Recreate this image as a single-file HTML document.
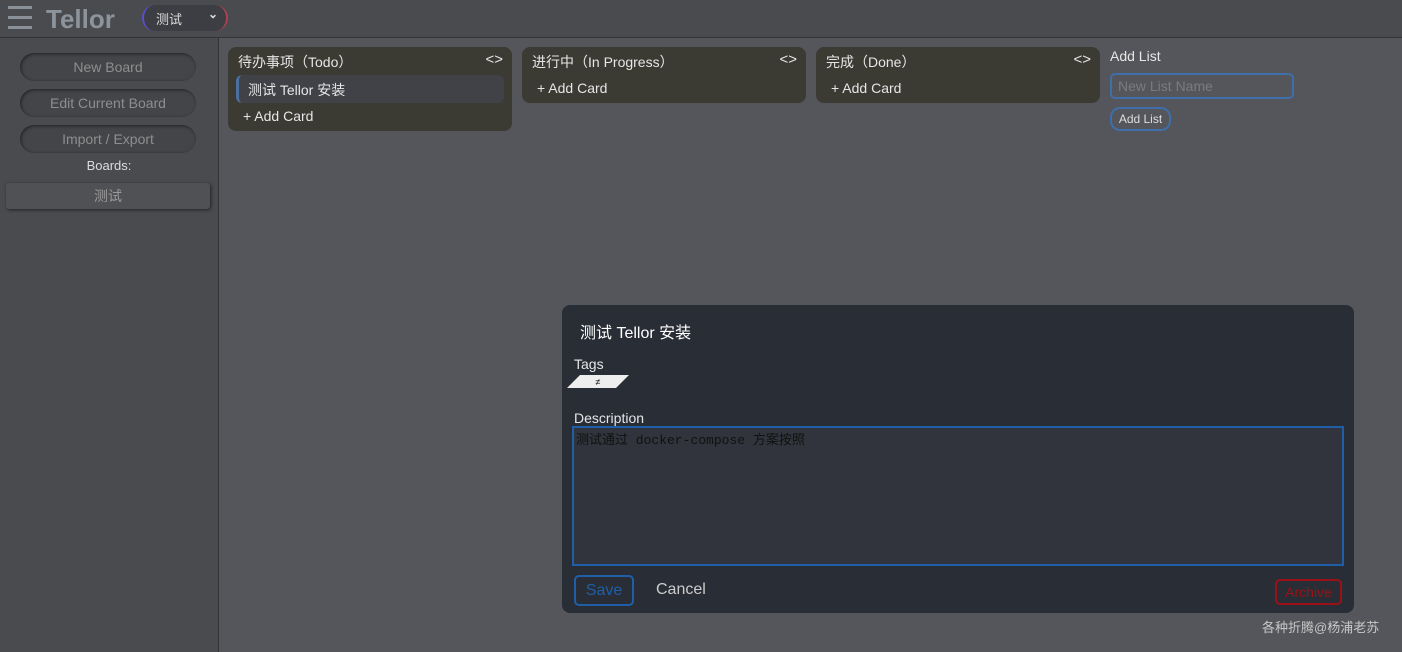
<!DOCTYPE html>
<html><head><meta charset="utf-8"><style>
*{box-sizing:border-box;margin:0;padding:0}
body{width:1402px;height:652px;background:#55565b;font-family:"Liberation Sans","Noto Sans CJK SC",sans-serif;position:relative;overflow:hidden;color:#e6e6e6}
.hdr{position:absolute;left:0;top:0;width:1402px;height:38px;background:#4a4b4f;border-bottom:1px solid #333}
.side{position:absolute;left:0;top:38px;width:219px;height:614px;background:#4a4b4f;border-right:1px solid #333}
.ham{position:absolute;left:8px;top:6px;width:24px}
.ham i{display:block;height:3px;background:#8a9098;margin-bottom:7px}
.logo{position:absolute;left:46px;top:4px;font-size:26px;font-weight:bold;color:#8c939b}
.sel{position:absolute;left:142px;top:5px;width:86px;height:26px;border-radius:13px;background:#3d3e43;border-left:2px solid #5a4fd0;border-right:2px solid #b04050;font-size:13px;padding:4px 12px;color:#ddd}
.sel b{position:absolute;right:8px;top:2px;font-size:12px}
.sb{position:absolute;left:20px;width:176px;height:28px;border-radius:14px;background:#444549;box-shadow:inset 1px 1px 3px #222;color:#8e8e8e;font-size:14px;text-align:center;line-height:28px}
.list{position:absolute;top:47px;width:284px;background:#3b3a33;border-radius:8px}
.lt{font-size:14px;padding:5px 10px;height:28px;position:relative}
.lt span{position:absolute;right:9px;top:4px;font-size:15px}
.card{margin:0 8px 0 8px;background:#404248;border-left:3px solid #4a6fa0;border-radius:6px;height:28px;font-size:14px;padding:5px 9px}
.add{font-size:14px;padding:5px 15px;height:28px}
.modal{position:absolute;left:562px;top:305px;width:792px;height:308px;background:#292d35;border-radius:8px}
</style></head><body>
<div class="hdr"><div class="ham"><i></i><i></i><i></i></div><div class="logo">Tellor</div><div class="sel">测试<b>⌄</b></div></div>
<div class="side">
<div class="sb" style="top:15px">New Board</div>
<div class="sb" style="top:51px">Edit Current Board</div>
<div class="sb" style="top:87px">Import / Export</div>
<div style="position:absolute;top:120px;width:218px;text-align:center;font-size:13px;color:#ddd">Boards:</div>
<div style="position:absolute;left:6px;top:145px;width:204px;height:26px;background:#505155;border-radius:3px;box-shadow:1px 1px 3px #222;color:#999;font-size:14px;text-align:center;line-height:26px">测试</div>
</div>
<div class="list" style="left:228px;height:84px"><div class="lt">待办事项（Todo）<span>&lt;&gt;</span></div><div class="card">测试 Tellor 安装</div><div class="add">+ Add Card</div></div>
<div class="list" style="left:522px;height:56px"><div class="lt">进行中（In Progress）<span>&lt;&gt;</span></div><div class="add">+ Add Card</div></div>
<div class="list" style="left:816px;height:56px"><div class="lt">完成（Done）<span>&lt;&gt;</span></div><div class="add">+ Add Card</div></div>
<div style="position:absolute;left:1110px;top:48px;font-size:14px">Add List</div>
<div style="position:absolute;left:1110px;top:73px;width:184px;height:26px;border:2px solid #3f6ea8;border-radius:5px;color:#7a7b80;font-size:14px;padding:3px 6px">New List Name</div>
<div style="position:absolute;left:1110px;top:107px;width:61px;height:24px;border:2px solid #3f6ea8;border-radius:10px;font-size:12px;line-height:20px;text-align:center;white-space:nowrap;color:#ddd">Add List</div>
<div class="modal">
<div style="position:absolute;left:18px;top:14px;font-size:16px;color:#fff">测试 Tellor 安装</div>
<div style="position:absolute;left:12px;top:51px;font-size:14px">Tags</div>
<svg style="position:absolute;left:5px;top:70px" width="62" height="14"><polygon points="0,13 13,0 62,0 49,13" fill="#eee"/><text x="31" y="10" font-size="9" fill="#000" text-anchor="middle">≠</text></svg>
<div style="position:absolute;left:12px;top:105px;font-size:14px">Description</div>
<div style="position:absolute;left:10px;top:121px;width:772px;height:140px;border:2px solid #1e5fa8;background:#31343c;font-family:'Liberation Mono','Noto Sans CJK SC',monospace;font-size:13px;color:#111;padding:1px 2px">测试通过 docker-compose 方案按照</div>
<div style="position:absolute;left:12px;top:270px;width:60px;height:31px;border:2px solid #1e5fa8;border-radius:5px;color:#1e5fa8;font-size:16px;text-align:center;line-height:27px">Save</div>
<div style="position:absolute;left:94px;top:276px;font-size:16px;color:#ccc">Cancel</div>
<div style="position:absolute;left:713px;top:274px;width:67px;height:26px;border:2px solid #9a1118;border-radius:5px;color:#9a1118;font-size:14px;text-align:center;line-height:22px">Archive</div>
</div>
<div style="position:absolute;left:1262px;top:617px;font-size:13px;color:#c8c8c8">各种折腾@杨浦老苏</div>
</body></html>
